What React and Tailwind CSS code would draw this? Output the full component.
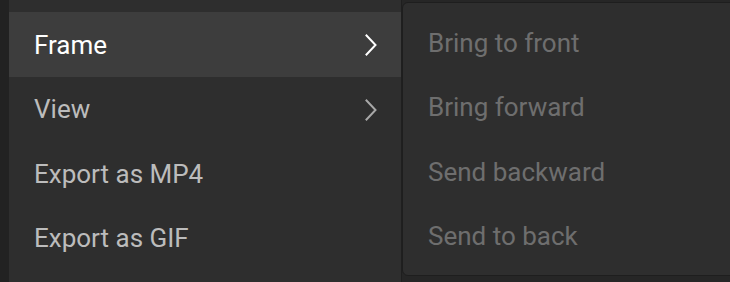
const items = [
  { label: 'Frame', sub: true, active: true },
  { label: 'View', sub: true },
  { label: 'Export as MP4' },
  { label: 'Export as GIF' },
]

const subItems = ['Bring to front', 'Bring forward', 'Send backward', 'Send to back']

function Chevron({ className }) {
  return (
    <svg width="14" height="22" viewBox="0 0 14 22" fill="none" className={className}>
      <path d="M2.5 1.5 L11.5 11 L2.5 20.5" stroke="currentColor" strokeWidth="2" strokeLinecap="square" />
    </svg>
  )
}

export default function App() {
  return (
    <div
      className="relative flex h-[282px] w-[730px] overflow-hidden bg-[#262626]"
      style={{ fontFamily: 'Roboto, "Noto Sans", sans-serif' }}
    >
      <div className="w-[9px] shrink-0 bg-[#222222]" />
      <div className="w-[392px] shrink-0 bg-[#2e2e2e] pt-3">
        {items.map((item) => (
          <div
            key={item.label}
            className={
              'flex h-[64.5px] items-center justify-between pl-[25px] pr-[23px] pt-[2px] text-[26px] ' +
              (item.active ? 'bg-[#3d3d3d] text-white' : 'text-[#bcbcbc]')
            }
          >
            <span>{item.label}</span>
            {item.sub && <Chevron className={item.active ? 'text-white' : 'text-[#a8a8a8]'} />}
          </div>
        ))}
      </div>
      <div className="w-[1px] shrink-0 bg-[#1f1f1f]" />

      {/* submenu */}
      <div className="absolute left-[402px] top-[2px] h-[274px] w-[340px] rounded-md border border-[#1e1e1e] bg-[#2e2e2e] pt-2">
        {subItems.map((label) => (
          <div key={label} className="flex h-[64.5px] items-center pl-[25px] text-[26px] text-[#6e6e6e]">
            {label}
          </div>
        ))}
      </div>
    </div>
  )
}
